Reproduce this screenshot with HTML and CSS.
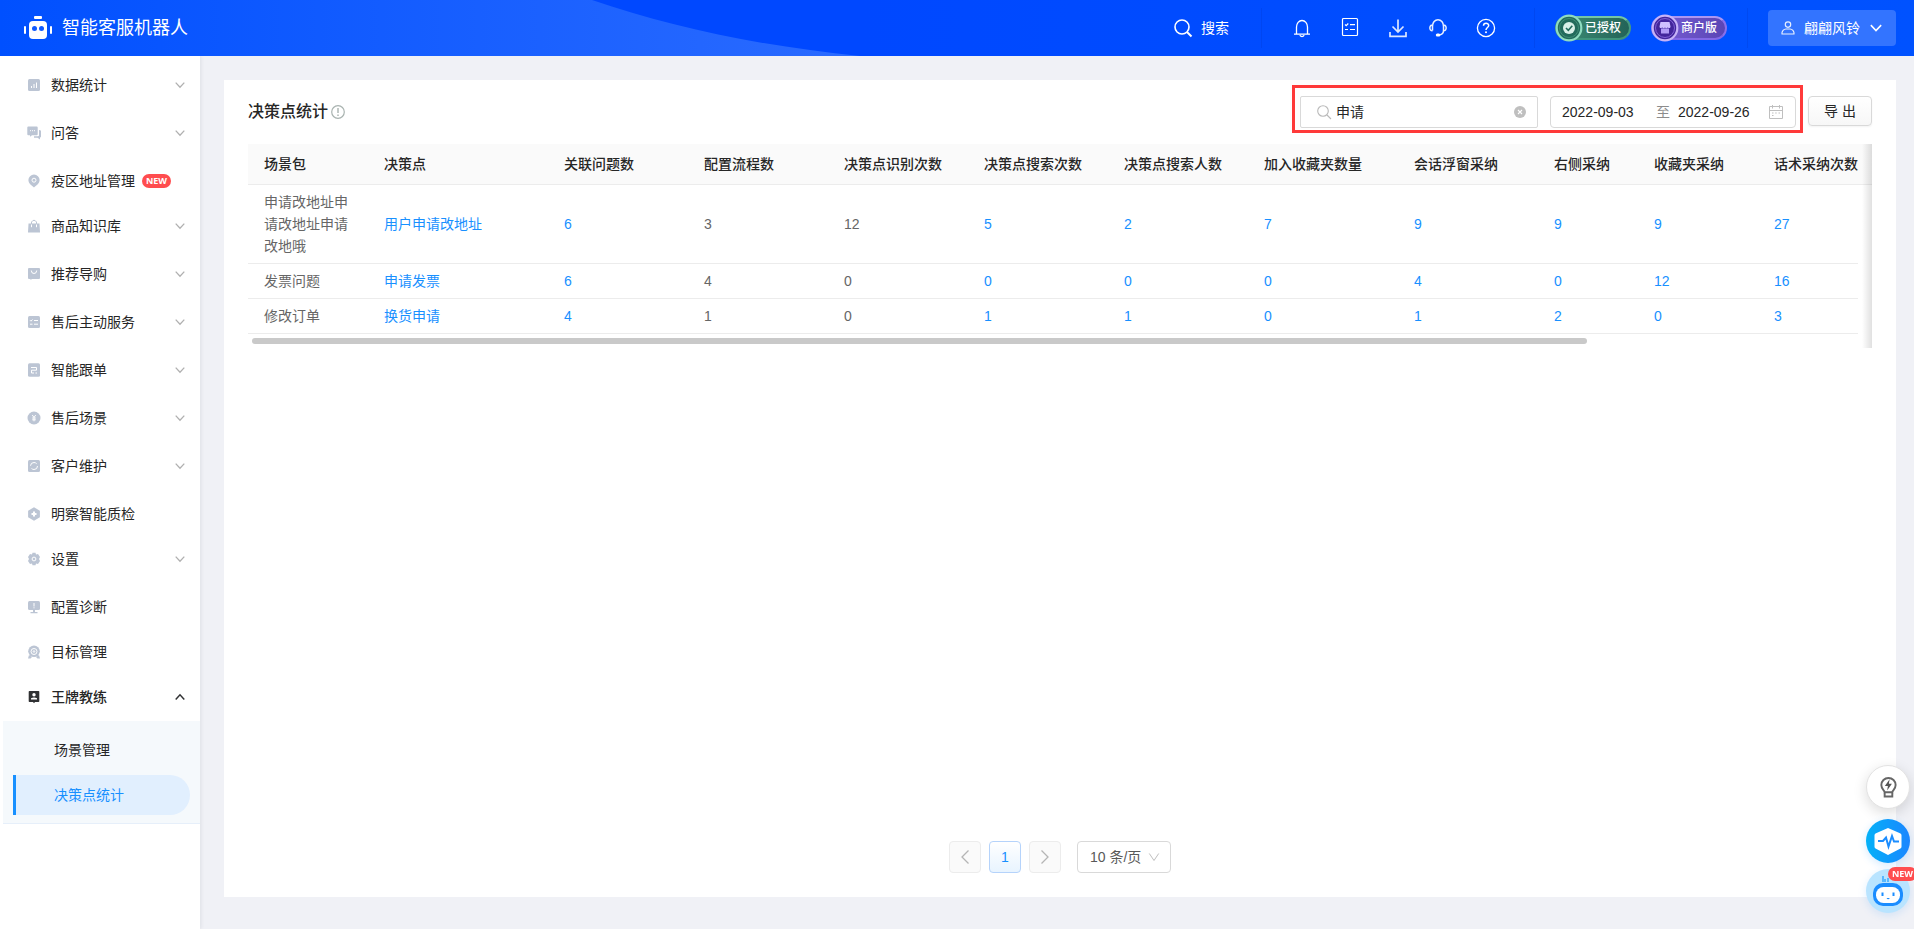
FILE: index.html
```html
<!DOCTYPE html>
<html lang="zh-CN">
<head>
<meta charset="utf-8">
<title>智能客服机器人 - 决策点统计</title>
<link rel="stylesheet" href="styles.css">
</head>
<body>
<svg class="sprite" aria-hidden="true">
  <symbol id="down" viewBox="0 0 10 10"><path d="M.7 2.6 5 7.2l4.300-4.600" fill="none" stroke="currentColor" stroke-width="1.300"/></symbol>
  <symbol id="up" viewBox="0 0 10 10"><path d="M.7 7.400 5 2.800l4.300 4.600" fill="none" stroke="currentColor" stroke-width="1.500"/></symbol>
</svg>

<header class="topbar">
  <svg class="topbar-wave" viewBox="0 0 860 56" aria-hidden="true">
    <defs><linearGradient id="wave" x1="0" x2="1" y1="0" y2="0"><stop offset="0" stop-color="#0050ff"/><stop offset="1" stop-color="#2b6bff"/></linearGradient></defs>
    <path d="M0 0H592C670 27 760 46 860 56H0Z" fill="url(#wave)"/>
  </svg>
  <div class="brand">
    <svg class="brand-icon" viewBox="0 0 28 24" aria-hidden="true">
      <rect x="10" y="0" width="8" height="3" rx="1" fill="#fff"/>
      <rect x="5" y="5" width="18" height="18" rx="4" fill="#fff"/>
      <rect x="0" y="10" width="2" height="8" rx="1" fill="#fff"/><rect x="26" y="10" width="2" height="8" rx="1" fill="#fff"/>
      <circle cx="10.500" cy="12.500" r="2.500" fill="#0f59ff"/><circle cx="17.500" cy="12.500" r="2.500" fill="#0f59ff"/>
    </svg>
    <span class="brand-name">智能客服机器人</span>
  </div>
  <div class="tools">
    <button class="tool-search" type="button">
      <svg class="tool-icon" viewBox="0 0 20 20"><g fill="none" stroke="#fff" stroke-width="1.600"><circle cx="9" cy="9" r="7"/><path d="m14 14 4.500 4.500" stroke-width="2"/></g></svg>搜索
    </button>
    <span class="sep"></span>
    <div class="tool-icons">
      <button type="button" aria-label="通知"><svg class="tool-icon" viewBox="0 0 20 20"><g fill="none" stroke="#fff" stroke-width="1.300"><path d="M4.500 15.500V9a5.500 6.500 0 0 1 11 0v6.500M2 16.200h16M8 17a2 1.500 0 0 0 4 0"/></g></svg></button>
      <button type="button" aria-label="任务"><svg class="tool-icon" viewBox="0 0 20 20"><g fill="none" stroke="#fff" stroke-width="1.200"><rect x="2.500" y=".5" width="15" height="17" rx="1"/><path d="m5 6.500 1.200 1.200L8.300 5.500M10 6.700h5M5 11.500h3M10 11.500h5"/></g></svg></button>
      <button type="button" aria-label="下载"><svg class="tool-icon" viewBox="0 0 20 20"><g fill="none" stroke="#dce7ff" stroke-width="1.700"><path d="M10 1.500v12M4.500 8.500 10 14l5.500-5.500M2 14v4.300h16V14"/></g></svg></button>
      <button class="tight" type="button" aria-label="客服"><svg class="tool-icon" viewBox="0 0 20 20"><g fill="none" stroke="#e6eeff" stroke-width="1.500"><path d="M4.500 12.500V8.200a5.500 6.500 0 0 1 11 0v4.300c0 2.500-1.500 4-4 4.500M4.300 7C1 7 1 13 4.500 12.800M15.700 7c3.300 0 3.300 6-.2 5.800"/></g><rect x="7.800" y="15.500" width="4.500" height="3" rx="1.500" fill="#fff"/></svg></button>
      <button type="button" aria-label="帮助"><svg class="tool-icon" viewBox="0 0 20 20"><g fill="none" stroke="#fff" stroke-width="1.300"><circle cx="10" cy="10" r="8.600"/><path d="M7.500 7.800c0-3.500 5.200-3.300 5.200-.3 0 2-2.700 2-2.700 4.500" stroke-width="1.500"/></g><circle cx="10" cy="14.300" r="1" fill="#fff"/></svg></button>
    </div>
    <span class="sep sep-wide"></span>
    <div class="badge badge-green">
      <svg class="badge-icon" viewBox="0 0 28 28" aria-hidden="true"><circle cx="14" cy="14" r="12.300" fill="#236b5c" stroke="#8fdcc0" stroke-width="2.200"/><circle cx="14" cy="14" r="9.500" fill="none" stroke="#3f8f76" stroke-width="1"/><circle cx="14" cy="14" r="6" fill="#d9f0e8"/><path d="m11 14 2.300 2.300 4-4.500" fill="none" stroke="#236b5c" stroke-width="1.600"/></svg>已授权
    </div>
    <div class="badge badge-purple">
      <svg class="badge-icon" viewBox="0 0 28 28" aria-hidden="true"><circle cx="14" cy="14" r="12.300" fill="#43269c" stroke="#c6b3f8" stroke-width="2.200"/><circle cx="14" cy="14" r="9.500" fill="none" stroke="#8062d8" stroke-width="1"/><path d="M9.500 8h9l1 4.500c0 2-2.600 2-2.700.5-.1 1.800-2.700 1.800-2.800 0-.1 1.800-2.700 1.800-2.800 0-.1 1.500-2.700 1.500-2.700-.5Z" fill="#cfc0ff"/><path d="M10 14.500h8V19.500H10z" fill="#b19cf5"/></svg>商户版
    </div>
    <span class="sep"></span>
    <button class="user" type="button">
      <svg class="user-icon" viewBox="0 0 14 14"><g fill="none" stroke="#e8f0ff" stroke-width="1.200"><circle cx="7" cy="3.600" r="2.700"/><path d="M1 13c-.5-3 2-5 4-5h4c2 0 4.500 2 4 5Z"/></g></svg>
      <span>翩翩风铃</span>
      <svg class="chev"><use href="#down"/></svg>
    </button>
  </div>
</header>

<div class="body">
  <nav class="sidebar">
    <ul class="menu">
      <li><button class="item parent" type="button"><svg class="mi" viewBox="0 0 12 12"><rect width="12" height="12" rx="1.500"/><path d="M3.500 9V7M6 9V5M8.500 9V3.500" class="cut"/></svg>数据统计<svg class="chev"><use href="#down"/></svg></button></li>
      <li><button class="item parent" type="button"><svg class="mi" viewBox="0 0 12 12"><path d="M.3-.5h8.400q1 0 1 1v6.700q0 1-1 1H4L2 9.700V8.200H.3q-1 0-1-1V.5q0-1 1-1ZM11 3q2 0 2 1.200V9.500q0 1-1 1v2L9.500 10.800H6V9.300h4q1 0 1-1Z"/><path d="M2 3.700h1M4 3.700h1M6 3.700h1" class="cut"/></svg>问答<svg class="chev"><use href="#down"/></svg></button></li>
      <li><a class="item" href="#"><svg class="mi" viewBox="0 0 12 12"><path d="M6-.5A5.600 5.600 0 0 1 11.600 5.100C11.600 9 8 10.500 6 12.500 4 10.500.4 9 .4 5.100A5.600 5.600 0 0 1 6-.5Z"/><circle cx="6" cy="5.200" r="2" class="cut"/></svg>疫区地址管理<span class="new">NEW</span></a></li>
      <li><button class="item parent" type="button"><svg class="mi" viewBox="0 0 12 12"><path d="M.5 3.500h11l.5 9H0Z"/><path d="M3.500 4V2q2.500-3.500 5 0v2" fill="none" stroke="#bcc5d4"/><path d="M3.500 4.500v2.700M8.500 4.500v2.700" class="cut"/></svg>商品知识库<svg class="chev"><use href="#down"/></svg></button></li>
      <li><button class="item parent" type="button"><svg class="mi" viewBox="0 0 12 12"><path d="M1 0h10q1 0 1 1v9q0 1-1 1H4l-1.500 1V11H1q-1 0-1-1V1q0-1 1-1Z"/><path d="M3.300 2.500q0 3 2.700 3t2.700-3" class="cut"/></svg>推荐导购<svg class="chev"><use href="#down"/></svg></button></li>
      <li><button class="item parent" type="button"><svg class="mi" viewBox="0 0 12 12"><rect width="12" height="12" rx="1.500"/><path d="m2 4.200 1 1L4.500 3.500M6 4.500h4M2 8.200h2.500M6 8.200h4" class="cut"/></svg>售后主动服务<svg class="chev"><use href="#down"/></svg></button></li>
      <li><button class="item parent" type="button"><svg class="mi" viewBox="0 0 12 12"><rect y="-.8" width="12" height="13.600" rx="1.500"/><path d="M3 3.500h5.500v2.700h-5V9H6M7.500 9H9" class="cut"/></svg>智能跟单<svg class="chev"><use href="#down"/></svg></button></li>
      <li><button class="item parent" type="button"><svg class="mi" viewBox="0 0 12 12"><circle cx="6" cy="6" r="6.500"/><path d="m4.300 3 1.700 2.500L7.700 3M6 5.500V9.300M4.200 6h3.600M4.200 7.800h3.600" class="cut"/></svg>售后场景<svg class="chev"><use href="#down"/></svg></button></li>
      <li><button class="item parent" type="button"><svg class="mi" viewBox="0 0 12 12"><rect width="12" height="12" rx="1.500"/><circle cx="6" cy="6" r="3.500" class="cut" stroke-dasharray="8 3"/></svg>客户维护<svg class="chev"><use href="#down"/></svg></button></li>
      <li><a class="item" href="#"><svg class="mi" viewBox="0 0 12 12"><path d="m6-.7 5.900 3.400v6.600L6 12.700.1 9.300V2.700Z"/><path d="M6 3.500v5M3.500 6h5" class="cut thick"/></svg>明察智能质检</a></li>
      <li><button class="item parent" type="button"><svg class="mi" viewBox="0 0 12 12"><path d="M4.500-.3h3L8 1.500 10 1l2 3-1 2 1 2-2 3-2-.5-.5 1.800h-3L4 10.500 2 11 0 8l1-2-1-2 2-3 2 .5Z"/><circle cx="6" cy="6" r="1.900" class="cut"/></svg>设置<svg class="chev"><use href="#down"/></svg></button></li>
      <li><a class="item" href="#"><svg class="mi" viewBox="0 0 12 12"><rect width="12" height="9" rx="1.500"/><path d="M5 9h2v2h2.500v1.200h-7V11H5Z"/><path d="M6 2v3.500M6 6.300v1" class="cut"/></svg>配置诊断</a></li>
      <li><a class="item" href="#"><svg class="mi" viewBox="0 0 12 12"><circle cx="6" cy="5.300" r="5.800"/><path d="M0 12.500 1 9l3 2-1.500 1.500ZM12 12.500 11 9l-3 2 1.500 1.500Z"/><circle cx="6" cy="5.500" r="3" class="cut"/><circle cx="6" cy="5.500" r=".8" class="cut"/></svg>目标管理</a></li>
      <li class="open">
        <button class="item parent" type="button" aria-expanded="true"><svg class="mi" viewBox="0 0 12 12"><path d="M1.500 0h9q.8 0 .8.800v9.400q0 .8-.8.800H7l-1 1.200L5 11H1.500q-.8 0-.8-.8V.8q0-.8.8-.8Z"/><circle cx="6" cy="3.700" r="1.700" fill="#fff"/><path d="M3 8.500V7.300q3-1.600 6 0v1.200Z" fill="#fff"/></svg>王牌教练<svg class="chev"><use href="#up"/></svg></button>
        <ul class="submenu">
          <li><a class="subitem" href="#">场景管理</a></li>
          <li><a class="subitem active" href="#" aria-current="page">决策点统计</a></li>
        </ul>
      </li>
    </ul>
  </nav>

  <main class="main">
    <section class="card">
      <div class="card-head">
        <h1 class="title">决策点统计<svg class="info" viewBox="0 0 14 14"><circle cx="7" cy="7" r="6.300" fill="none" stroke="#a9b3b0" stroke-width="1.200"/><path d="M7 3v5M7 9.500v1.500" stroke="#a9b3b0" stroke-width="1.400"/></svg></h1>
        <div class="filters">
          <label class="search">
            <svg class="glass" viewBox="0 0 14 14"><g fill="none" stroke="#b9b9b9" stroke-width="1.100"><circle cx="6" cy="6" r="5.300"/><path d="m10 10 4 4"/></g></svg>
            <input class="search-input" type="text" value="申请" aria-label="搜索决策点">
            <svg class="clear" viewBox="0 0 12 12"><circle cx="6" cy="6" r="6" fill="#bfbfbf"/><path d="m4 4 4 4M8 4 4 8" stroke="#fff" stroke-width="1.100"/></svg>
          </label>
          <div class="range">
            <input class="date" type="text" value="2022-09-03" aria-label="开始日期">
            <span class="to">至</span>
            <input class="date" type="text" value="2022-09-26" aria-label="结束日期">
            <svg class="calendar" viewBox="0 0 14 14"><g fill="none" stroke="#bfbfbf"><path d="M.5 1.500h13v12H.5ZM.5 5.500h13M3.500 0v3.500M10.500 0v3.500"/><path d="M3 8h1.500M6.200 8h1.500M9.500 8H11M3 10.500h1.500"/></g></svg>
          </div>
        </div>
        <button class="export" type="button">导 出</button>
      </div>

      <div class="table-wrap">
        <table class="stats">
          <colgroup><col class="w120"><col class="w180"><col class="w140" span="5"><col class="w150"><col class="w140"><col class="w100"><col class="w120"><col class="w100"><col></colgroup>
          <thead><tr><th>场景包</th><th>决策点</th><th>关联问题数</th><th>配置流程数</th><th>决策点识别次数</th><th>决策点搜索次数</th><th>决策点搜索人数</th><th>加入收藏夹数量</th><th>会话浮窗采纳</th><th>右侧采纳</th><th>收藏夹采纳</th><th>话术采纳次数</th><th class="gutter"></th></tr></thead>
          <tbody>
            <tr><td>申请改地址申请改地址申请改地哦</td><td><a href="#">用户申请改地址</a></td><td><a href="#">6</a></td><td>3</td><td>12</td><td><a href="#">5</a></td><td><a href="#">2</a></td><td><a href="#">7</a></td><td><a href="#">9</a></td><td><a href="#">9</a></td><td><a href="#">9</a></td><td><a href="#">27</a></td><td class="gutter"></td></tr>
            <tr><td>发票问题</td><td><a href="#">申请发票</a></td><td><a href="#">6</a></td><td>4</td><td>0</td><td><a href="#">0</a></td><td><a href="#">0</a></td><td><a href="#">0</a></td><td><a href="#">4</a></td><td><a href="#">0</a></td><td><a href="#">12</a></td><td><a href="#">16</a></td><td class="gutter"></td></tr>
            <tr><td>修改订单</td><td><a href="#">换货申请</a></td><td><a href="#">4</a></td><td>1</td><td>0</td><td><a href="#">1</a></td><td><a href="#">1</a></td><td><a href="#">0</a></td><td><a href="#">1</a></td><td><a href="#">2</a></td><td><a href="#">0</a></td><td><a href="#">3</a></td><td class="gutter"></td></tr>
          </tbody>
        </table>
        <div class="scrollbar"><div class="thumb"></div></div>
      </div>

      <div class="pager">
        <button class="page" type="button" disabled aria-label="上一页"><svg viewBox="0 0 14 14"><path d="M10.500.5 4 7l6.500 6.500" fill="none" stroke="#b5b5b5" stroke-width="1.300"/></svg></button>
        <button class="page current" type="button">1</button>
        <button class="page" type="button" disabled aria-label="下一页"><svg viewBox="0 0 14 14"><path d="M3.500.5 10 7l-6.500 6.500" fill="none" stroke="#b5b5b5" stroke-width="1.300"/></svg></button>
        <label class="size"><select aria-label="每页条数"><option>10 条/页</option></select><svg class="size-arrow" viewBox="0 0 10 10"><path d="M.3 1.500 5 8.500l4.700-7" fill="none" stroke="#bfbfbf"/></svg></label>
      </div>
    </section>
  </main>
</div>

<div class="float">
  <button class="fab fab-light" type="button" aria-label="建议"><svg viewBox="0 0 44 44"><g fill="none" stroke="#666" stroke-width="2"><path d="M18.500 27.500c0-2-3.500-3.200-3.500-7.500a7.500 7.500 0 0 1 15 0c0 4.300-3.500 5.500-3.500 7.500Z"/><path d="M18.500 28v4h8v-4"/></g><path d="m23.700 14-5 7h3.200l-.8 4.700 5-7h-3.200Z" fill="#555"/></svg></button>
  <button class="fab fab-pulse" type="button" aria-label="诊断"><svg viewBox="0 0 44 44"><path d="m22 9 12 5.300q1.500.7 1.500 2v11.400q0 1.300-1.500 2L22 36l-12-6.300q-1.500-.7-1.500-2V16.300q0-1.300 1.500-2Z" fill="#fff"/><path d="M12 22h5l3-3.500 2.500 9L26 17l2 5.500H33" fill="none" stroke="#1b8dff" stroke-width="2"/></svg></button>
  <button class="fab fab-bot" type="button" aria-label="机器人"><svg viewBox="0 0 44 44"><path d="M17 7v6M19 10v3M22 9v4" stroke="#1b9cff" stroke-width="1.200"/><rect x="7" y="14" width="30" height="23" rx="10" fill="#1b8dff"/><rect x="10" y="18" width="24" height="16" rx="7.500" fill="#fff"/><path d="M16.500 23.500v3.500M27.500 23.500v3.500" stroke="#1b8dff" stroke-width="2"/><path d="M20.500 29q1.700 2.500 3.300 0Z" fill="#1b8dff"/></svg><span class="new new-float">NEW</span></button>
</div>
</body>
</html>
```
FILE: styles.css
```css
* { box-sizing: border-box; }
body {
  margin: 0;
  min-height: 100vh;
  display: flex;
  flex-direction: column;
  overflow: hidden;
  background: #f0f1f6;
  color: #262626;
  font: 14px/22px "Liberation Sans", "Noto Sans CJK SC", sans-serif;
}
button, input, select { font: inherit; color: inherit; }
button { padding: 0; border: 0; background: none; cursor: pointer; }
a { color: inherit; text-decoration: none; }
ul { margin: 0; padding: 0; list-style: none; }
svg { display: block; flex: none; overflow: visible; }
.sprite { position: absolute; width: 0; height: 0; }
.chev { width: 10px; height: 10px; }

/* Top bar */
.topbar {
  position: relative;
  display: flex;
  align-items: center;
  justify-content: space-between;
  height: 56px;
  padding: 0 18px 0 24px;
  background: linear-gradient(90deg, #0048ff 45%, #0052ff);
  color: #fff;
}
.topbar-wave { position: absolute; left: 0; top: 0; width: 860px; height: 56px; }
.brand { position: relative; display: flex; align-items: center; gap: 10px; }
.brand-icon { width: 28px; height: 24px; }
.brand-name { font-size: 18px; line-height: 24px; }
.tools, .tool-search, .tool-icons { display: flex; align-items: center; }
.tool-search { gap: 8px; }
.tool-icon { width: 20px; height: 20px; }
.tool-icons { gap: 28px; }
.tool-icons .tight { margin-left: -8px; }
.sep { width: 1px; height: 40px; margin: 0 20px; background: rgba(0, 0, 80, .08); }
.tool-search + .sep { margin: 0 30px 0 32px; }
.sep-wide { margin-left: 38px; }
.badge {
  display: flex;
  align-items: center;
  gap: 2px;
  width: 76px;
  height: 24px;
  border: 2px solid;
  border-radius: 12px;
  font-size: 12px;
  font-weight: 500;
}
.badge + .badge { margin-left: 20px; }
.badge-icon { width: 28px; height: 28px; margin-left: -2px; }
.badge-green { border-color: #74c5a5 #479a80 #3f947c; background: linear-gradient(90deg, #3f8f76, #236358); }
.badge-purple { border-color: #ab96f2 #8a70ea #8268e6; background: linear-gradient(90deg, #7a5fd6, #5a45b5); }
.user {
  display: flex;
  align-items: center;
  height: 36px;
  padding: 0 14px 0 13px;
  border-radius: 4px;
  background: #3374ff;
}
.user-icon { width: 14px; height: 14px; margin-right: 9px; }
.user .chev { width: 12px; height: 12px; margin-left: 10px; }

/* Sidebar */
.body { flex: 1; display: flex; }
.sidebar {
  flex: none;
  width: 200px;
  padding: 1px 0 0 3px;
  background: #fff;
  box-shadow: 1px 0 4px rgba(0, 21, 41, .08);
}
.menu { padding-top: 8px; }
.item {
  display: flex;
  align-items: center;
  width: 100%;
  height: 40px;
  margin-bottom: 5px;
  padding: 0 15px 0 25px;
  text-align: left;
}
.parent { margin-bottom: 8px; }
.mi { width: 12px; height: 12px; margin-right: 11px; fill: #bcc5d4; }
.mi .cut { fill: none; stroke: #fff; stroke-width: 1; }
.mi .thick { stroke-width: 2; }
.item .chev { margin-left: auto; color: #b0b0b0; }
.new {
  height: 14px;
  margin-left: 7px;
  padding: 0 4px;
  border-radius: 7px;
  background: #ff4d4f;
  color: #fff;
  font: 700 9px/14px "Open Sans", sans-serif;
}
.open > .item { margin-bottom: 4px; font-weight: 500; }
.open .mi { fill: #303133; }
.open .item .chev { color: #303133; }
.submenu { padding: 9px 10px 8px; border-bottom: 1px solid #e6effa; background: #f5f9fc; }
.subitem { display: block; height: 40px; padding-left: 41px; line-height: 40px; }
.submenu li + li { margin-top: 5px; }
.active {
  padding-left: 38px;
  border-left: 3px solid #1890ff;
  border-radius: 0 20px 20px 0;
  background: #e1effe;
  color: #1890ff;
}

/* Content card */
.main { flex: 1; display: flex; min-width: 0; padding: 24px 18px 32px 24px; }
.card { flex: 1; display: flex; flex-direction: column; min-width: 0; padding: 5px 24px 24px; background: #fff; }
.card-head { display: flex; align-items: flex-start; margin-bottom: 11px; }
.title {
  display: flex;
  align-items: center;
  gap: 3px;
  margin: 15px auto 0 0;
  font-size: 16px;
  font-weight: 500;
  line-height: 24px;
}
.info { width: 14px; height: 14px; }
.filters { display: flex; gap: 12px; padding: 8px 4px 2px 5px; border: 3px solid #ff3a3a; }
.search, .range { display: flex; align-items: center; height: 32px; border: 1px solid #d9d9d9; }
.search { width: 238px; padding: 0 11px 0 16px; border-radius: 2px; }
.glass { width: 14px; height: 14px; margin-right: 5px; }
.search-input, .date { min-width: 0; padding: 0; border: 0; outline: 0; background: none; }
.search-input { flex: 1; }
.clear { width: 12px; height: 12px; }
.range { width: 246px; padding: 0 12px 0 11px; border-radius: 4px; }
.date { width: 80px; }
.to { margin: 0 8px 0 14px; color: #8c8c8c; }
.calendar { width: 14px; height: 14px; margin-left: auto; }
.export {
  width: 64px;
  height: 30px;
  margin: 11px 0 0 5px;
  border: 1px solid #d9d9d9;
  border-radius: 4px;
  background: linear-gradient(#fff, #f7f7f7);
  box-shadow: 0 1px 2px rgba(0, 0, 0, .05);
}

/* Statistics table */
.table-wrap { position: relative; overflow: hidden; }
.table-wrap::after {
  content: "";
  position: absolute;
  top: 0;
  right: 0;
  bottom: 0;
  width: 10px;
  background: linear-gradient(90deg, rgba(0, 0, 0, 0), rgba(0, 0, 0, .12));
}
.stats { width: 100%; table-layout: fixed; border-collapse: separate; border-spacing: 0; }
.w100 { width: 100px; }
.w120 { width: 120px; }
.w140 { width: 140px; }
.w150 { width: 150px; }
.w180 { width: 180px; }
.stats th, .stats td { padding: 6px 16px; border-bottom: 1px solid #ececec; text-align: left; }
.stats th { height: 41px; padding-right: 0; background: #fafafa; font-weight: 500; white-space: nowrap; }
.stats td { color: #666; }
.stats td a { color: #1890ff; }
.stats .gutter { padding: 0; }
.stats td.gutter { border: 0; }
.scrollbar { padding: 4px; }
.thumb { width: 82.6%; height: 6px; border-radius: 3px; background: #c9c9c9; }

/* Pagination */
.pager { display: flex; justify-content: center; gap: 8px; margin-top: auto; }
.page {
  display: grid;
  place-items: center;
  width: 32px;
  height: 32px;
  border: 1px solid #ececec;
  border-radius: 4px;
  background: #fafafa;
}
.page svg { width: 14px; height: 14px; }
.current { border-color: #b5d3fb; background: linear-gradient(#fff, #e8f4ff); color: #1890ff; font-weight: 500; }
.size { display: grid; align-items: center; width: 94px; margin-left: 8px; }
.size select, .size-arrow { grid-area: 1 / 1; }
.size select {
  width: 100%;
  height: 32px;
  padding: 0 12px;
  border: 1px solid #d9d9d9;
  border-radius: 4px;
  appearance: none;
  background: #fff;
  color: #595959;
}
.size-arrow { width: 10px; height: 10px; justify-self: end; margin-right: 12px; pointer-events: none; }

/* Floating helpers */
.float { position: fixed; right: 4px; bottom: 16px; display: flex; flex-direction: column; gap: 6px; }
.fab { position: relative; width: 44px; height: 44px; border-radius: 50%; }
.fab-light { margin-bottom: 4px; border: 1px solid #e2e2e2; background: #fff; box-shadow: 0 4px 14px rgba(0, 0, 0, .14); }
.fab-pulse { background: linear-gradient(90deg, #03b1f8, #1b86ff); box-shadow: 0 2px 8px rgba(24, 144, 255, .2); }
.fab-bot { background: #b9e4ff; box-shadow: 0 2px 8px rgba(24, 144, 255, .15); }
.new-float { position: absolute; top: -2px; left: 22px; margin: 0; }
```
